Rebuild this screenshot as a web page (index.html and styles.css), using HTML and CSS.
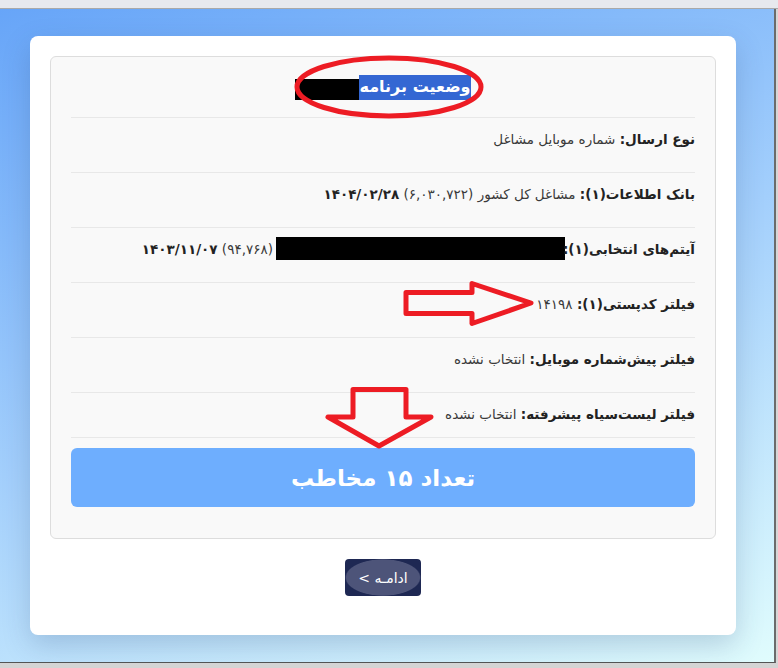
FILE: index.html
```html
<!DOCTYPE html>
<html lang="fa" dir="rtl">
<head>
    <meta charset="UTF-8">
    <meta name="viewport" content="width=device-width, initial-scale=1.0">
    <title>وضعیت برنامه</title>
    <link rel="stylesheet" href="styles.css">
</head>
<body>
    <div class="topbar"></div>

    <div class="stage">
        <div class="card">
            <div class="panel">
                <div class="title">
                    <span class="selected">وضعیت برنامه</span><span class="redact redact-title"></span>
                </div>

                <div class="row"><b>نوع ارسال:</b> شماره موبایل مشاغل</div>
                <div class="row"><b>بانک اطلاعات(۱):</b> مشاغل کل کشور (۶,۰۳۰,۷۲۲) <b>۱۴۰۴/۰۲/۲۸</b></div>
                <div class="row"><b>آیتم‌های انتخابی(۱):</b><span class="redact redact-item"></span>(۹۴,۷۶۸) <b>۱۴۰۳/۱۱/۰۷</b></div>
                <div class="row"><b>فیلتر کدپستی(۱):</b> ۱۴۱۹۸</div>
                <div class="row"><b>فیلتر پیش‌شماره موبایل:</b> انتخاب نشده</div>
                <div class="row last"><b>فیلتر لیست‌سیاه پیشرفته:</b> انتخاب نشده</div>

                <div class="count">تعداد ۱۵ مخاطب</div>
            </div>

            <div class="actions">
                <button class="next">ادامـه &gt;</button>
            </div>
        </div>
    </div>

    <div class="taskbar"></div>

    <!-- red marks drawn on top of the screenshot -->
    <svg class="marks" width="778" height="668" viewBox="0 0 778 668">
        <ellipse cx="389" cy="87" rx="92" ry="29" />
        <polygon points="406,292.5 472,292.5 472,283.5 531,303 472,323.5 472,313.5 406,313.5" />
        <polygon points="353,389.5 406,389.5 406,417 431,417 379,446 328,417 353,417" />
    </svg>
</body>
</html>
```

FILE: styles.css
```css
body {
    margin: 0;
    width: 778px;
    height: 668px;
    overflow: hidden;
    background-color: #d6d6d6;
    font-family: "DejaVu Sans", sans-serif;
    color: #333;
    direction: ltr;
}

.topbar {
    height: 8px;
    background-color: #e7e9ee;
    border-bottom: 1px solid #a9a9a9;
}

.stage {
    box-sizing: border-box;
    width: 776px;
    height: 654px;
    padding: 27px 38px 0 30px;
    background: linear-gradient(160deg, #67a5f8 0%, #a3cffc 50%, #e0fcfd 100%);
    border-right: 2px solid #6b6b6b;
    border-bottom: 1px solid #555;
}

.card {
    box-sizing: border-box;
    width: 706px;
    height: 599px;
    padding: 20px;
    background-color: #fff;
    border-radius: 8px;
    box-shadow: 0 10px 28px rgba(40, 70, 120, 0.22);
    direction: rtl;
}

.panel {
    padding: 0 20px 31px;
    background-color: #f9f9f9;
    border: 1px solid #ddd;
    border-radius: 6px;
}

.title {
    height: 60px;
    display: flex;
    justify-content: center;
    align-items: center;
    border-bottom: 1px solid #e8e8e8;
    font-size: 16px;
    font-weight: bold;
}

.selected {
    padding: 2px 0 3px;
    line-height: 20px;
    background-color: #3467d3;
    color: #fff;
}

.redact {
    display: inline-block;
    background-color: #000;
}

.redact-title {
    width: 64px;
    height: 21px;
    margin-top: 4px;
}

.redact-item {
    width: 289px;
    height: 23px;
    vertical-align: -6px;
    margin: 0 -2px 0 3px;
}

.row {
    padding: 9px 0 21px;
    line-height: 24px;
    font-size: 13.5px;
    color: #3a3a3a;
    border-bottom: 1px solid #e8e8e8;
}

.row b {
    color: #222;
}

.row.last {
    padding-bottom: 11px;
}

.count {
    margin-top: 10px;
    height: 59px;
    display: flex;
    justify-content: center;
    align-items: center;
    background-color: #6eaefe;
    border-radius: 6px;
    color: #fff;
    font-size: 23px;
    font-weight: bold;
}

.actions {
    margin-top: 20px;
    display: flex;
    justify-content: center;
}

.next {
    width: 76px;
    height: 37px;
    padding: 0;
    border: none;
    border-radius: 4px;
    background: radial-gradient(ellipse 50% 50% at center, #4d5479 96%, #1e2853 100%);
    color: #fff;
    font-family: "DejaVu Sans", sans-serif;
    font-size: 14px;
}

.taskbar {
    height: 5px;
    background-color: #d4d4d4;
}

.marks {
    position: absolute;
    top: 0;
    left: 0;
    pointer-events: none;
}

.marks ellipse, .marks polygon {
    fill: none;
    stroke: #ed1c24;
    stroke-width: 5;
    stroke-linejoin: round;
}
```
